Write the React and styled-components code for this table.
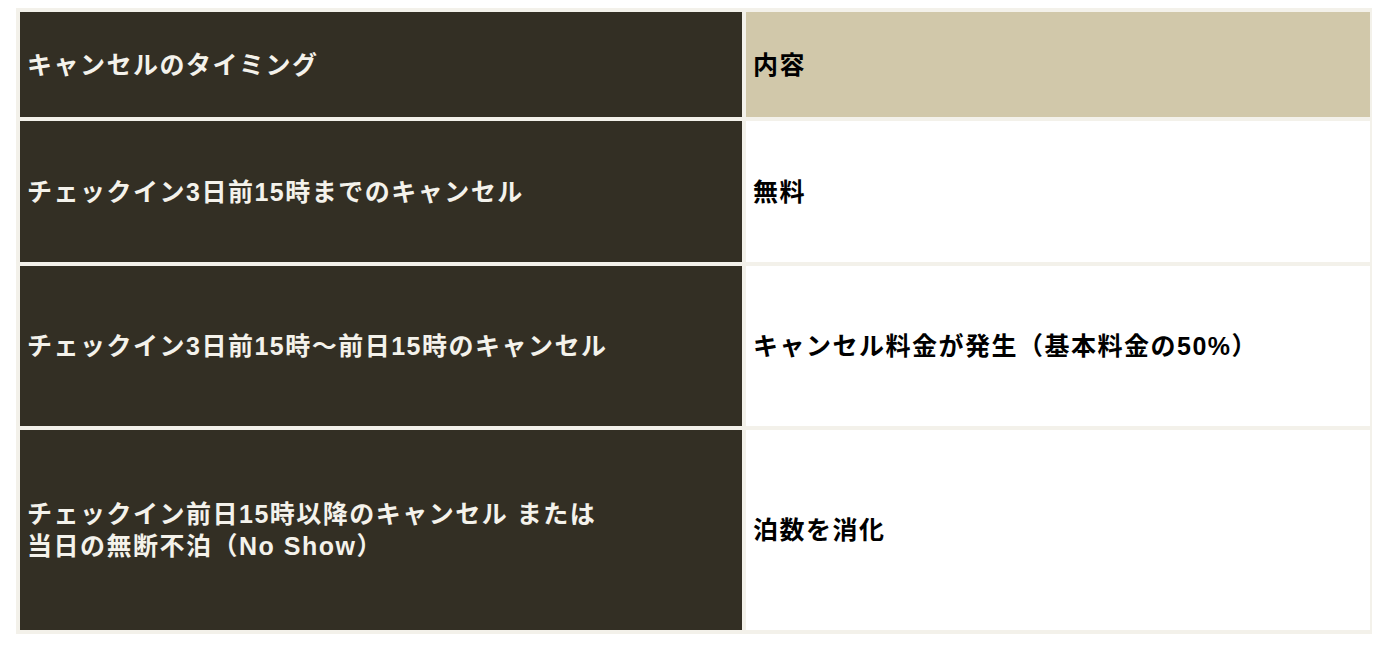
import styled, { createGlobalStyle } from "styled-components";

const GlobalStyle = createGlobalStyle`
  body {
    margin: 8px;
    background: #ffffff;
    font-family: "Liberation Sans", "Noto Sans CJK JP", sans-serif;
  }
`;

const rows = [
  {
    timing: "チェックイン3日前15時までのキャンセル",
    detail: "無料",
    height: 141,
  },
  {
    timing: "チェックイン3日前15時〜前日15時のキャンセル",
    detail: "キャンセル料金が発生（基本料金の50%）",
    height: 160,
  },
  {
    timing: (
      <>
        チェックイン前日15時以降のキャンセル または
        <br />
        当日の無断不泊（No Show）
      </>
    ),
    detail: "泊数を消化",
    height: 200,
  },
];

export default function App() {
  return (
    <>
      <GlobalStyle />
      <Table>
        <Cell $dark $h={105}>キャンセルのタイミング</Cell>
        <Cell $head $h={105}>内容</Cell>
        {rows.map((r, i) => (
          <Row key={i} timing={r.timing} detail={r.detail} height={r.height} />
        ))}
      </Table>
    </>
  );

  function Row(props) {
    return (
      <>
        <Cell $dark $h={props.height}>{props.timing}</Cell>
        <Cell $h={props.height}>{props.detail}</Cell>
      </>
    );
  }
}

const Table = styled.div`
  display: grid;
  grid-template-columns: 722px 624px;
  gap: 4px;
  padding: 4px;
  margin-left: 8px;
  width: 1350px;
  background: #f3f1ea;
`;

const Cell = styled.div`
  display: flex;
  align-items: center;
  height: ${(p) => p.$h}px;
  padding: 0 7px;
  box-sizing: border-box;
  font-size: 25px;
  font-weight: 700;
  line-height: 32px;
  letter-spacing: 1.5px;
  background: ${(p) => (p.$dark ? "#332f24" : p.$head ? "#d1c8aa" : "#ffffff")};
  color: ${(p) => (p.$dark ? "#f4f2eb" : "#000000")};
`;
